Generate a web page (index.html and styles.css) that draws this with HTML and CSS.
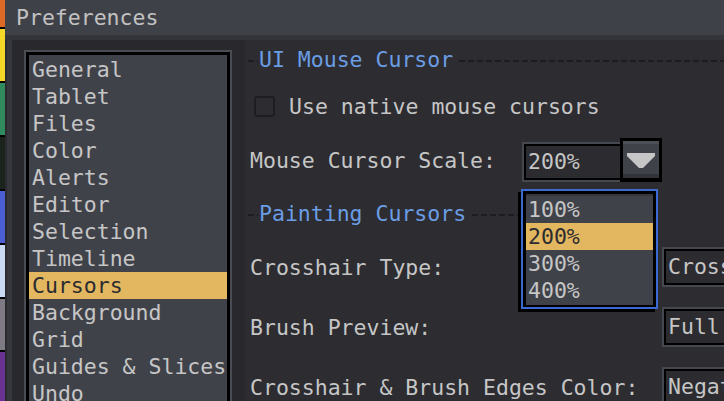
FILE: index.html
```html
<!DOCTYPE html>
<html>
<head>
<meta charset="utf-8">
<link rel="stylesheet" href="styles.css">
</head>
<body>
<div class="screen">
  <div class="strip">
    <span class="seg seg-orange"></span>
    <span class="seg seg-yellow"></span>
    <span class="seg seg-green"></span>
    <span class="seg seg-dark"></span>
    <span class="seg seg-blue"></span>
    <span class="seg seg-light"></span>
    <span class="seg seg-gray"></span>
    <span class="seg seg-purple"></span>
  </div>
  <div class="dialog">
    <div class="titlebar">Preferences</div>
    <div class="band"></div>
    <div class="body">
      <div class="sidebar">
        <div class="listbox">
          <div class="list-inner">
            <div class="item">General</div>
            <div class="item">Tablet</div>
            <div class="item">Files</div>
            <div class="item">Color</div>
            <div class="item">Alerts</div>
            <div class="item">Editor</div>
            <div class="item">Selection</div>
            <div class="item">Timeline</div>
            <div class="item selected">Cursors</div>
            <div class="item">Background</div>
            <div class="item">Grid</div>
            <div class="item">Guides &amp; Slices</div>
            <div class="item">Undo</div>
            <div class="item">Theme</div>
          </div>
        </div>
      </div>
      <div class="content">
        <div class="sep sep-first">
          <span class="dash dash-lead"></span>
          <span class="sep-title">UI Mouse Cursor</span>
          <span class="dash dash-fill"></span>
        </div>
        <div class="row check-row">
          <span class="checkbox"></span>
          <span class="text">Use native mouse cursors</span>
        </div>
        <div class="row scale-row">
          <span class="label label-short">Mouse Cursor Scale:</span>
          <div class="combo">
            <div class="entry entry-scale">200%</div>
            <div class="drop-btn">
              <svg width="28" height="15" viewBox="0 0 28 15"><polygon points="0,0 28,0 28,3 16,15 12,15 0,3" fill="#c6c6c6"/></svg>
            </div>
          </div>
        </div>
        <div class="sep sep-second">
          <span class="dash dash-lead"></span>
          <span class="sep-title">Painting Cursors</span>
          <span class="dash dash-fill"></span>
        </div>
        <div class="row pref-row row-first">
          <span class="label label-long">Crosshair Type:</span>
          <div class="entry entry-wide">Crosshair</div>
        </div>
        <div class="row pref-row">
          <span class="label label-long">Brush Preview:</span>
          <div class="entry entry-wide">Full Preview</div>
        </div>
        <div class="row pref-row">
          <span class="label label-long">Crosshair &amp; Brush Edges Color:</span>
          <div class="entry entry-wide">Negative</div>
        </div>
      </div>
    </div>
  </div>
  <div class="popup">
    <div class="popup-inner">
      <div class="pitem">100%</div>
      <div class="pitem selected">200%</div>
      <div class="pitem">300%</div>
      <div class="pitem">400%</div>
    </div>
  </div>
</div>
</body>
</html>
```

FILE: styles.css
```css
html, body {
  margin: 0;
  padding: 0;
  background: #2c2c31;
}
body {
  width: 724px;
  height: 401px;
  overflow: hidden;
  font-family: "DejaVu Sans Mono", "Liberation Mono", monospace;
  font-size: 21.5px;
  color: #c6c6c6;
}
.screen {
  position: relative;
  width: 724px;
  height: 401px;
  display: flex;
  overflow: hidden;
}
.strip {
  width: 5px;
  flex: none;
  display: flex;
  flex-direction: column;
  gap: 2px;
  background: #000;
}
.seg { display: block; flex: none; }
.seg-orange { height: 27px; background: #dc6a26; }
.seg-yellow { height: 52px; background: #f5d728; }
.seg-green { height: 52px; background: #2f8a5e; }
.seg-dark { height: 52px; background: #1a241d; }
.seg-blue { height: 52px; background: #4b5fd2; }
.seg-light { height: 52px; background: #c9d9f2; }
.seg-gray { height: 51px; background: #7e7b85; }
.seg-purple { height: 60px; background: #6a3391; }

.dialog {
  flex: 1;
  display: flex;
  flex-direction: column;
  min-width: 0;
}
.titlebar {
  height: 35px;
  line-height: 35px;
  padding-left: 11px;
  background: #3f4148;
  color: #c2c2c2;
  flex: none;
}
.band {
  height: 5px;
  background: #34353b;
  flex: none;
}
.body {
  flex: 1;
  display: flex;
  min-height: 0;
}
.sidebar {
  width: 240px;
  flex: none;
  background: linear-gradient(to right, #2a2a2f 0 2px, #37383e 2px 7px, #28282d 7px);
  padding-left: 19px;
  padding-top: 10px;
  box-sizing: border-box;
}
.listbox {
  width: 208px;
  height: 400px;
  box-sizing: border-box;
  border: 2px solid #4a4c53;
  border-bottom: none;
}
.list-inner {
  height: 100%;
  box-sizing: border-box;
  border: 3px solid #000;
  border-bottom: none;
  background: #40424a;
  padding-top: 1px;
}
.item {
  height: 27px;
  line-height: 27px;
  padding-left: 3px;
  white-space: nowrap;
  color: #c6c6c6;
}
.item.selected {
  background: #e3b760;
  color: #2b2b30;
}

.content {
  flex: 1;
  min-width: 0;
  background: #2c2c31;
  padding-left: 3px;
  padding-top: 6px;
  display: flex;
  flex-direction: column;
  overflow: hidden;
}
.sep {
  height: 27px;
  line-height: 27px;
  display: flex;
  align-items: center;
  flex: none;
}
.sep-second {
  margin-top: 18px;
  width: 380px;
}
.sep-title {
  color: #6b9de4;
  white-space: nowrap;
}
.dash {
  display: block;
  height: 2px;
  margin-top: 3px;
  background: repeating-linear-gradient(to right, #1d1d21 0 6px, transparent 6px 9px);
}
.dash-lead {
  width: 10px;
  margin-right: 1px;
  flex: none;
}
.dash-fill {
  flex: 1;
  margin-left: 6px;
}

.row {
  display: flex;
  align-items: center;
  flex: none;
  padding-left: 2px;
  white-space: nowrap;
}
.check-row {
  height: 27px;
  margin-top: 20px;
  padding-left: 6px;
}
.checkbox {
  width: 21px;
  height: 21px;
  box-sizing: border-box;
  border: 2px solid #1e1e22;
  border-radius: 3px;
  margin-right: 14px;
  flex: none;
}
.scale-row {
  height: 44px;
  margin-top: 18px;
}
.label-short { width: 272px; flex: none; }
.label-long { width: 412px; flex: none; }
.combo {
  display: flex;
  align-items: flex-end;
  height: 44px;
}
.entry {
  height: 40px;
  line-height: 36px;
  box-sizing: border-box;
  border: 2px solid #46484f;
  box-shadow: inset 2px 2px 0 #000, inset 0 -2px 0 #000;
  background: #2b2b30;
  padding-left: 4px;
  color: #c6c6c6;
  white-space: nowrap;
  overflow: hidden;
}
.entry-scale {
  width: 98px;
  border-right: none;
}
.drop-btn {
  width: 42px;
  height: 44px;
  box-sizing: border-box;
  border: 3px solid #000;
  border-bottom-width: 4px;
  background: #40424a;
  box-shadow: inset 0 3px 0 #4d4f57, inset 0 -4px 0 #323339;
  display: flex;
  justify-content: center;
  padding-top: 12px;
}
.drop-btn svg { display: block; }
.pref-row {
  height: 40px;
  margin-top: 20px;
}
.entry-wide {
  width: 160px;
  flex: none;
}

.popup {
  position: absolute;
  left: 521px;
  top: 189px;
  width: 137px;
  box-sizing: border-box;
  border: 2px solid #3b6bd2;
  box-shadow: -3px 3px 0 #000;
  background: #000;
}
.popup-inner {
  border-top: 3px solid #000;
  border-left: 3px solid #000;
  border-right: 3px solid #000;
  border-bottom: 2px solid #000;
  background: #40424a;
  padding-top: 2px;
  padding-bottom: 1px;
  box-shadow: inset 0 2px 0 #34363c;
}
.pitem {
  height: 27px;
  line-height: 27px;
  padding-left: 2px;
  color: #c6c6c6;
}
.pitem.selected {
  background: #e3b760;
  color: #2b2b30;
}
```
